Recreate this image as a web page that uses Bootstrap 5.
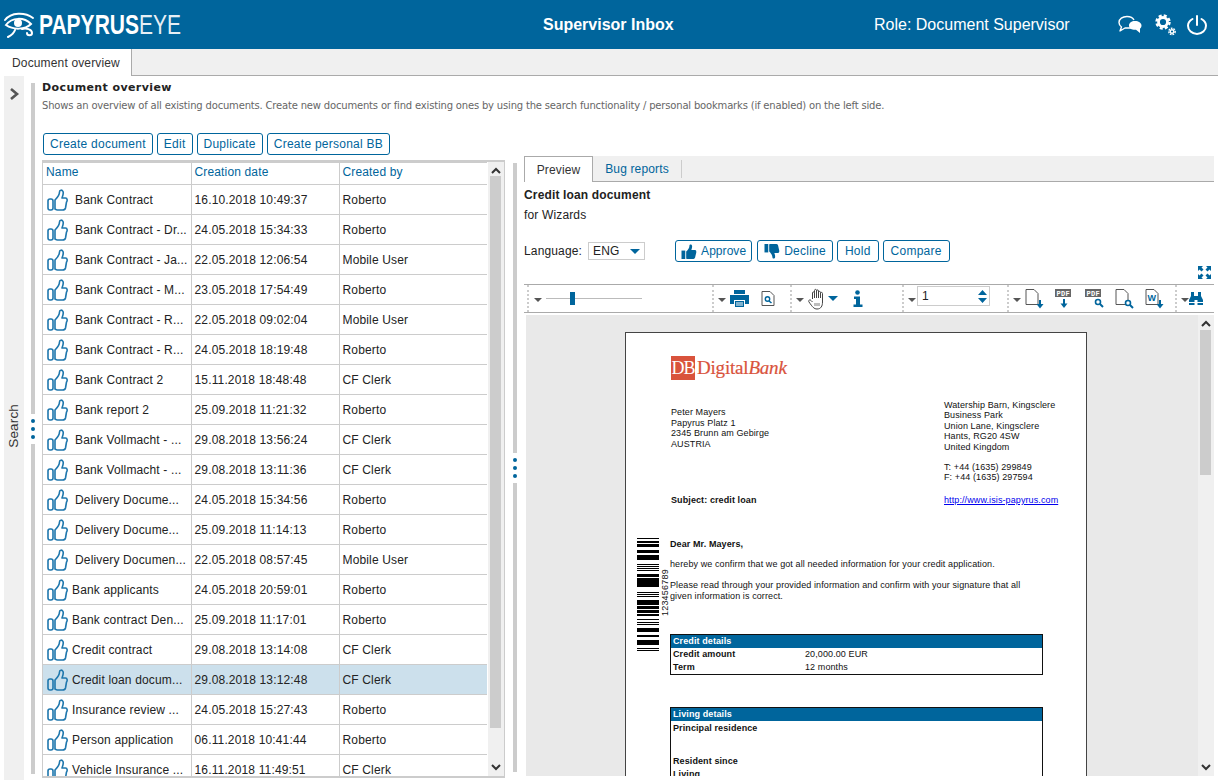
<!doctype html>
<html lang="en">
<head>
<meta charset="utf-8">
<title>Supervisor Inbox</title>
<link href="https://cdn.jsdelivr.net/npm/bootstrap@5.3.0/dist/css/bootstrap.min.css" rel="stylesheet">
<style>
html,body{height:780px;overflow:hidden}
body{font-family:"Liberation Sans",Arial,sans-serif;font-size:12px;color:#222;background:#fff;letter-spacing:.15px}
.topbar{height:49px;background:#00659c;color:#fff}
.logo-box{width:543px}
.logo-eye{margin-left:3px;margin-right:4px}
.logo-word{font-size:28px;line-height:1;font-family:"Liberation Sans",sans-serif;letter-spacing:0;transform:scaleX(.75);transform-origin:left center;white-space:nowrap}
.logo-word b{font-weight:700}
.logo-word span{font-weight:400;opacity:.9}
.top-title{width:331px;font-size:16px;font-weight:700;letter-spacing:0}
.top-role{width:244px;font-size:16px;letter-spacing:0}
.top-icons{gap:13px}
.top-power{margin-left:-2px}
.tabbar{height:27px;background:#f0f0f0;border-bottom:1px solid #aaa}
.tab-main{width:132px;height:27px;background:#fff;border-right:1px solid #aaa;padding:5px 0 0 12px;color:#333}
.workspace{height:704px;margin-left:4px}
.rail{width:20px;background:#f0f0f0;padding-top:11px}
.rail-label{writing-mode:vertical-rl;transform:rotate(180deg);font-size:13.5px;color:#333;margin-top:303px;margin-left:0}
.split{width:4px;gap:0}
.split-one{margin-left:7px;padding:7px 0 6px}
.split-two{margin-left:8px;padding:87px 0 8px}
.split-seg{flex:1;background:#ccc}
.split-dots{width:4px;padding:5px 0;display:flex;flex-direction:column;align-items:center;gap:4px}
.split-dots i{display:block;width:4px;height:4px;border-radius:50%;background:#00659c}
.pane-left{width:463px;margin-left:7px;padding-top:5px}
.pane-head{font-family:"DejaVu Sans",Verdana,sans-serif;font-size:11px;font-weight:700;color:#222;letter-spacing:.4px;line-height:14px}
.pane-desc{font-family:"DejaVu Sans",Verdana,sans-serif;font-size:10px;color:#666;letter-spacing:-.18px;line-height:14px;margin-top:4px;white-space:nowrap}
.act{height:22px;padding:0 6px;border:1px solid #00659c;border-radius:3px;color:#00659c;background:#fff;font-size:12px;line-height:20px;letter-spacing:.25px}
.act:hover{color:#00659c}
.act-approve{padding:0 5px;letter-spacing:.05px}
.act-hold{padding:0 7px}
.act-compare{padding:0 7px}
.act-row{gap:4px;margin:20px 0 5px 1px}
.grid-wrap{height:618px;border-top:2px solid #ccc;border-right:1px solid #ccc;border-bottom:2px solid #ccc;overflow:hidden}
.grid-clip{width:446px;overflow:hidden;border-left:1px solid #ccc}
.doc-table{table-layout:fixed;width:446px;margin:0;--bs-table-border-color:#ccc;--bs-table-color:#222}
.doc-table th,.doc-table td{padding:0 3px;white-space:nowrap;overflow:hidden;vertical-align:middle;border-color:#ccc;font-size:12px}
.doc-table th{height:21px;font-weight:400;color:#00659c;padding-bottom:3px}
.doc-table td{height:30px}
.doc-table tr>:first-child{border-left:0}
.doc-table .sel-row td{background:#cce0ec;--bs-table-bg:#cce0ec}
.thumb{width:21px;height:22px;vertical-align:-7px;margin-right:7px;margin-left:1px}
.thumb-close{margin-right:4px}
.vscroll{width:16px;background:#f0f0f0;margin-left:1px;position:relative}
.vthumb{position:absolute;left:2px;right:3px;top:14px;height:552px;background:#ccc}
.sc-up,.sc-down{position:absolute;left:3px}
.sc-up{top:5px}.sc-down{bottom:5px}
.pane-right{width:690px;margin-left:7px;padding-top:80px}
.subtabs{height:26px;background:#f0f0f0;border-bottom:1px solid #aaa}
.subtab-on{width:69px;height:26px;background:#fff;border:1px solid #aaa;border-bottom:0;text-align:center;line-height:26px;color:#333}
.subtab-off{width:89px;height:18px;margin-top:4px;border-right:1px solid #ccc;text-align:center;line-height:18px;color:#00659c}
.doc-title{font-weight:700;margin-top:5px;line-height:16px}
.doc-sub{margin-top:4px;line-height:16px}
.lang-row{margin-top:16px;height:24px}
.lang-pick{width:57px;height:18px;border:1px solid #ccc;margin-left:6px;padding:0 4px;line-height:16px;margin-right:30px}
.btn-group-a{gap:5px}
.btn-group-b{gap:4px}
.caret-d{display:block;width:0;height:0;border-left:4px solid transparent;border-right:4px solid transparent;border-top:4px solid #555;flex:none;margin-top:3px}
.caret-b{border-left-width:5px;border-right-width:5px;border-top:5px solid #00659c;margin-top:0}
.expand-row{height:18px;padding:3px 3px 0 0}
.toolbar{height:29px;border-top:1px solid #aaa;border-bottom:1px solid #aaa;margin-top:3px}
.tsec{height:27px;border-left:2px dotted #ccc;padding-left:4px}
.tsec-first{margin-left:3px;padding-left:5px}
.w1{width:185px}.w2{width:78px}.w3{width:112px}.w4{width:105px}.w5{width:168px}.w6{flex:1}
.slider-track{width:96px;height:1px;background:#bbb;position:relative;margin-left:4px}
.slider-knob{position:absolute;left:24px;top:-6px;width:5px;height:13px;background:#00659c}
.page-num{width:73px;height:20px;border:1px solid #ccc;padding:0 4px;line-height:18px;margin-left:1px;margin-top:-5px;position:relative}
.spin{position:absolute;right:1px;top:2px}
.tb-gap{margin-left:11px}
.tb-hand{margin-right:-2px}
.tb-bino{margin-left:-1px}
.tb-pdf-text{font:700 7px "Liberation Mono",monospace;fill:#fff;letter-spacing:.3px}
.tb-w-text{font:700 9px "Liberation Sans",sans-serif;fill:#00659c}
.viewer{height:461px;margin:2px 0 0 2px;background:#e9e9e9;overflow:hidden}
.view-area{width:671px;padding:17px 0 0 99px}
.paper{width:462px;height:600px;background:#fff;border:1px solid #444;border-bottom:0;padding:23px 27px 0 45px;font-size:9px;line-height:10.7px;color:#111;letter-spacing:.1px}
.db-logo{height:24px}
.db-box{width:24px;height:24px;background:#d9533c;color:#fff;font:400 18px/24px "Liberation Serif",serif;text-align:center;letter-spacing:-1px}
.db-word{font:19px/24px "Liberation Serif",serif;color:#d9533c;margin-left:2px;letter-spacing:-.2px;-webkit-text-stroke:.2px #d9533c}
.addr-row{margin-top:20px}
.addr-left{padding-top:7px}
.addr-right{width:115px;margin-right:0;line-height:10.4px;white-space:nowrap}
.gap-line{height:10px}
.subj-row{margin-top:12px}
.barcode-row{margin-left:-34px;margin-top:31px}
.barcode{width:22px;height:115px;flex:none}
.bar-num{writing-mode:vertical-rl;transform:rotate(180deg);font-size:9px;line-height:8px;height:111px;text-align:center;width:8px;margin:0 1px 0 2px;letter-spacing:.2px}
.letter-body{padding-top:2px}
.letter-p{margin:0 0 10px;white-space:nowrap}
.letter-block{width:373px;border:1px solid #111;margin-top:0}
.letter-block header{background:#00659c;color:#fff;font-weight:700;padding:0 2px;height:13px;line-height:13px}
.letter-line{padding:0 2px;height:13px;line-height:13px;display:flex}
.letter-line b{width:132px}
.letter-tall{padding-top:1px;height:14px}
.letter-void{height:20px}
.paper-space{height:23px}
.paper-space-lg{height:32px}
.view-bar{width:16px;margin-left:1px;background:#f0f0f0;position:relative}
.view-thumb{position:absolute;left:2px;width:11px;top:15px;height:145px;background:#ccc}
a.doc-link{color:#00e;text-decoration:underline}
</style>
</head>
<body>
<svg width="0" height="0" class="d-block position-absolute">
<symbol id="i-thumb" viewBox="0 0 21 22"><g fill="none" stroke="#1f77ad" stroke-width="1.6" stroke-linejoin="round"><rect x="1" y="10" width="5" height="11" rx="2"/><path d="M8 11C10 9 12.500 6.500 12.500 3 12.500 .8 15 .5 16 2.500 16.800 4.500 15.800 7 15 9H18.500C20.500 9 20.500 12 19.500 13L18.500 19C18 21 16.500 21 15.500 21H10.500C9.500 21 8 20 8 20Z"/></g></symbol>
<symbol id="i-thumb-fill" viewBox="0 0 16 16"><rect x="0" y="7" width="4" height="9" fill="#00659c"/><path fill="#00659c" d="M5 8C7 6 8.500 4 8.500 1.500 8.500 0 11 0 11.300 2 11.500 3.500 11 5 10.500 6.500H14.500C16 6.500 16 9 15.500 10L14.500 14.500C14 16 13 16 12 16H6C5.500 16 5 15.500 5 15.500Z"/></symbol>
</svg>

<header class="topbar d-flex align-items-center">
  <div class="logo-box d-flex align-items-center">
    <svg class="logo-eye" width="32" height="27" viewBox="0 0 32 27" fill="none" stroke="#fff" stroke-width="2" stroke-linecap="round"><path d="M2 9C8 1 22 1 30 7"/><path d="M3 14C9 6 21 6 28 13 22 19 10 19 3 14Z"/><circle cx="15" cy="12" r="4" fill="#fff" stroke="none"/><path d="M12 19C11 22 9 24 5 26"/><path d="M19 18C23 17 29 18 29 22 29 25 24 25 24 22"/></svg>
    <div class="logo-word"><b>PAPYRUS</b><span>EYE</span></div>
  </div>
  <div class="top-title">Supervisor Inbox</div>
  <div class="top-role">Role: Document Supervisor</div>
  <div class="top-icons d-flex align-items-center">
    <svg width="24" height="20" viewBox="0 0 24 20"><path d="M13 13H7L2 16 3.500 12C1.500 10.500 1 9 1 7.500 1 4 4.500 1.500 9 1.500 12 1.500 15 3 16 5" fill="none" stroke="#fff" stroke-width="1.4" stroke-linejoin="round"/><path d="M17 6C20.500 6 23.500 8 23.500 10.500 23.500 12 22.800 13 22 13.700V18L18 14.800C14 15.200 11 13.300 11 10.500 11 8 13.500 6 17 6Z" fill="#fff"/></svg>
    <svg width="21" height="22" viewBox="0 0 21 22" fill="none" stroke="#fff"><circle cx="8" cy="8" r="4.500" stroke-width="2.800"/><circle cx="8" cy="8" r="6.500" stroke-width="2.400" stroke-dasharray="3 2.100"/><circle cx="17" cy="17.500" r="1.800" stroke-width="1.400"/><circle cx="17" cy="17.500" r="3.200" stroke-width="1.400" stroke-dasharray="1.700 1"/></svg>
    <svg class="top-power" width="20" height="20" viewBox="0 0 20 20" fill="none" stroke="#fff" stroke-width="2" stroke-linecap="round"><path d="M5.500 4C2.800 5.600 1 8 1 10.700 1 15.300 5 19 10 19S19 15.300 19 10.700C19 8 17.200 5.600 14.500 4"/><path d="M10 1V10"/></svg>
  </div>
</header>

<nav class="tabbar"><div class="tab-main">Document overview</div></nav>

<main class="workspace d-flex">
  <aside class="rail d-flex flex-column">
    <svg class="ms-1" width="12" height="14" viewBox="0 0 12 14" fill="none" stroke="#555" stroke-width="2.600"><path d="M3 2L9 7 3 12"/></svg>
    <div class="rail-label">Search</div>
  </aside>

  <div class="split split-one d-flex flex-column"><div class="split-seg"></div><div class="split-dots"><i></i><i></i><i></i></div><div class="split-seg"></div></div>

  <section class="pane-left">
    <div class="pane-head">Document overview</div>
    <div class="pane-desc">Shows an overview of all existing documents. Create new documents or find existing ones by using the search functionality / personal bookmarks (if enabled) on the left side.</div>
    <div class="act-row d-flex">
      <button type="button" class="btn act">Create document</button>
      <button type="button" class="btn act">Edit</button>
      <button type="button" class="btn act">Duplicate</button>
      <button type="button" class="btn act">Create personal BB</button>
    </div>
    <div class="grid-wrap d-flex">
      <div class="grid-clip">
        <table class="table table-bordered doc-table">
          <colgroup><col style="width:148px"><col style="width:148px"><col style="width:150px"></colgroup>
          <thead><tr><th>Name</th><th>Creation date</th><th>Created by</th></tr></thead>
          <tbody>
            <tr><td><svg class="thumb"><use href="#i-thumb"/></svg>Bank Contract</td><td>16.10.2018 10:49:37</td><td>Roberto</td></tr>
            <tr><td><svg class="thumb"><use href="#i-thumb"/></svg>Bank Contract - Dr...</td><td>24.05.2018 15:34:33</td><td>Roberto</td></tr>
            <tr><td><svg class="thumb"><use href="#i-thumb"/></svg>Bank Contract - Ja...</td><td>22.05.2018 12:06:54</td><td>Mobile User</td></tr>
            <tr><td><svg class="thumb"><use href="#i-thumb"/></svg>Bank Contract - M...</td><td>23.05.2018 17:54:49</td><td>Roberto</td></tr>
            <tr><td><svg class="thumb"><use href="#i-thumb"/></svg>Bank Contract - R...</td><td>22.05.2018 09:02:04</td><td>Mobile User</td></tr>
            <tr><td><svg class="thumb"><use href="#i-thumb"/></svg>Bank Contract - R...</td><td>24.05.2018 18:19:48</td><td>Roberto</td></tr>
            <tr><td><svg class="thumb"><use href="#i-thumb"/></svg>Bank Contract 2</td><td>15.11.2018 18:48:48</td><td>CF Clerk</td></tr>
            <tr><td><svg class="thumb"><use href="#i-thumb"/></svg>Bank report 2</td><td>25.09.2018 11:21:32</td><td>Roberto</td></tr>
            <tr><td><svg class="thumb"><use href="#i-thumb"/></svg>Bank Vollmacht - ...</td><td>29.08.2018 13:56:24</td><td>CF Clerk</td></tr>
            <tr><td><svg class="thumb"><use href="#i-thumb"/></svg>Bank Vollmacht - ...</td><td>29.08.2018 13:11:36</td><td>CF Clerk</td></tr>
            <tr><td><svg class="thumb"><use href="#i-thumb"/></svg>Delivery Docume...</td><td>24.05.2018 15:34:56</td><td>Roberto</td></tr>
            <tr><td><svg class="thumb"><use href="#i-thumb"/></svg>Delivery Docume...</td><td>25.09.2018 11:14:13</td><td>Roberto</td></tr>
            <tr><td><svg class="thumb"><use href="#i-thumb"/></svg>Delivery Documen...</td><td>22.05.2018 08:57:45</td><td>Mobile User</td></tr>
            <tr><td><svg class="thumb thumb-close"><use href="#i-thumb"/></svg>Bank applicants</td><td>24.05.2018 20:59:01</td><td>Roberto</td></tr>
            <tr><td><svg class="thumb thumb-close"><use href="#i-thumb"/></svg>Bank contract Den...</td><td>25.09.2018 11:17:01</td><td>Roberto</td></tr>
            <tr><td><svg class="thumb thumb-close"><use href="#i-thumb"/></svg>Credit contract</td><td>29.08.2018 13:14:08</td><td>CF Clerk</td></tr>
            <tr class="sel-row"><td><svg class="thumb thumb-close"><use href="#i-thumb"/></svg>Credit loan docum...</td><td>29.08.2018 13:12:48</td><td>CF Clerk</td></tr>
            <tr><td><svg class="thumb thumb-close"><use href="#i-thumb"/></svg>Insurance review ...</td><td>24.05.2018 15:27:43</td><td>Roberto</td></tr>
            <tr><td><svg class="thumb thumb-close"><use href="#i-thumb"/></svg>Person application</td><td>06.11.2018 10:41:44</td><td>Roberto</td></tr>
            <tr><td><svg class="thumb thumb-close"><use href="#i-thumb"/></svg>Vehicle Insurance ...</td><td>16.11.2018 11:49:51</td><td>CF Clerk</td></tr>
          </tbody>
        </table>
      </div>
      <div class="vscroll">
        <div class="vthumb"></div>
        <svg class="sc-up" width="10" height="7" viewBox="0 0 10 7" fill="none" stroke="#333" stroke-width="2"><path d="M1 6L5 2 9 6"/></svg>
        <svg class="sc-down" width="10" height="7" viewBox="0 0 10 7" fill="none" stroke="#333" stroke-width="2"><path d="M1 1L5 5 9 1"/></svg>
      </div>
    </div>
  </section>

  <div class="split split-two d-flex flex-column"><div class="split-seg"></div><div class="split-dots"><i></i><i></i><i></i></div><div class="split-seg"></div></div>

  <section class="pane-right">
    <div class="subtabs d-flex"><div class="subtab-on">Preview</div><div class="subtab-off">Bug reports</div></div>
    <div class="doc-title">Credit loan document</div>
    <div class="doc-sub">for Wizards</div>
    <div class="lang-row d-flex align-items-center">
      <span>Language:</span>
      <div class="lang-pick d-flex align-items-center justify-content-between">ENG<i class="caret-d caret-b"></i></div>
      <div class="d-flex btn-group-a">
        <button type="button" class="btn act act-approve d-flex align-items-center gap-1"><svg width="16" height="15"><use href="#i-thumb-fill"/></svg>Approve</button>
        <div class="d-flex btn-group-b">
          <button type="button" class="btn act d-flex align-items-center gap-1"><svg width="16" height="15" viewBox="0 0 16 15"><g transform="matrix(1 0 0 -1 0 15)"><use href="#i-thumb-fill" width="16" height="15"/></g></svg>Decline</button>
          <button type="button" class="btn act act-hold">Hold</button>
          <button type="button" class="btn act act-compare">Compare</button>
        </div>
      </div>
    </div>
    <div class="expand-row d-flex justify-content-end">
      <svg width="13" height="13" viewBox="0 0 13 13" fill="#00659c"><path d="M0 0H5L3.500 1.500 5.500 3.500 3.500 5.500 1.500 3.500 0 5ZM13 0V5L11.500 3.500 9.500 5.500 7.500 3.500 9.500 1.500 8 0ZM0 13V8L1.500 9.500 3.500 7.500 5.500 9.500 3.500 11.500 5 13ZM13 13H8L9.500 11.500 7.500 9.500 9.500 7.500 11.500 9.500 13 8Z"/></svg>
    </div>
    <div class="toolbar d-flex">
      <div class="tsec tsec-first w1 d-flex align-items-center"><i class="caret-d"></i><div class="slider-track"><div class="slider-knob"></div></div></div>
      <div class="tsec w2 d-flex align-items-center gap-1"><i class="caret-d"></i>
        <svg width="19" height="19" viewBox="0 0 19 19" fill="#00659c"><path d="M4 1H15V5H4ZM0 6H19V15H15V11H4V15H0Z"/><path d="M5 12H14V18H5Z"/><path d="M6 14H13M6 16H13" stroke="#fff"/></svg>
        <svg class="ms-2" width="14" height="15" viewBox="0 0 14 15" fill="none" stroke="#555"><path d="M1 .5H9L13 4.500V14.500H1Z"/><circle cx="6.500" cy="8" r="2.200" stroke="#00659c" stroke-width="1.400"/><path d="M8 10L10.500 12" stroke="#00659c" stroke-width="1.600"/></svg>
      </div>
      <div class="tsec w3 d-flex align-items-center gap-1"><i class="caret-d"></i>
        <svg class="tb-hand" width="18" height="22" viewBox="0 0 18 22" fill="none" stroke="#444"><path d="M4.500 11V5C4.500 3.500 6.500 3.500 6.500 5V10M6.500 4.500V2.500C6.500 1 8.500 1 8.500 2.500V10M8.500 3C8.500 1.500 10.500 1.500 10.500 3V10M10.500 4.500C10.500 3 12.500 3 12.500 4.500V10M12.500 5.500C12.500 4 14.500 4 14.500 5.500V14C14.500 18 13 21 9 21 6 21 4.500 19 1 14 0 12.500 1.800 11 3 12.500L4.500 14"/><path d="M7 15V18M9 15V18M11 15V18" stroke-width=".7"/></svg>
        <i class="caret-d caret-b"></i>
        <svg class="ms-2" width="13" height="17" viewBox="-3 0 13 17" fill="#00659c"><circle cx="4.500" cy="2.500" r="2.300"/><path d="M1 6.500H7V14.500H9.500V17H.5V14.500H3V9H1Z"/></svg>
      </div>
      <div class="tsec w4 d-flex align-items-center"><i class="caret-d"></i>
        <div class="page-num">1<svg class="spin" width="11" height="15" viewBox="0 0 11 15" fill="#00659c"><path d="M5.500 1L10 6H1ZM5.500 14L1 9H10Z"/></svg></div>
      </div>
      <div class="tsec w5 d-flex align-items-center"><i class="caret-d"></i>
        <svg class="ms-1" width="19" height="20" viewBox="0 0 19 20" fill="none" stroke="#555"><path d="M1 .5H9L13 4.500V15.500H1Z"/><path d="M15 11V17" stroke="#00659c" stroke-width="2"/><path d="M11.500 15H18.500L15 19.500Z" fill="#00659c" stroke="none"/></svg>
        <svg class="tb-gap" width="19" height="20" viewBox="0 0 19 20"><rect width="16" height="8" fill="#666"/><text class="tb-pdf-text" x="1.500" y="6.500">PDF</text><path d="M9 10V16" stroke="#00659c" stroke-width="2"/><path d="M5.500 14.500H12.500L9 19Z" fill="#00659c"/></svg>
        <svg class="tb-gap" width="19" height="20" viewBox="0 0 19 20" fill="none"><rect width="16" height="8" fill="#666"/><text class="tb-pdf-text" x="1.500" y="6.500">PDF</text><circle cx="13" cy="13" r="2.500" stroke="#00659c" stroke-width="1.600"/><path d="M15 15L18 18" stroke="#00659c" stroke-width="2"/></svg>
        <svg class="tb-gap" width="19" height="20" viewBox="0 0 19 20" fill="none" stroke="#555"><path d="M1 .5H9L13 4.500V15.500H1Z"/><circle cx="13" cy="14" r="2.500" fill="#fff" stroke="#00659c" stroke-width="1.600"/><path d="M15 16L18 19" stroke="#00659c" stroke-width="2"/></svg>
        <svg class="tb-gap" width="19" height="20" viewBox="0 0 19 20" fill="none" stroke="#555"><path d="M1 .5H9L13 4.500V15.500H1Z"/><text class="tb-w-text" x="2.500" y="12" stroke="none">W</text><path d="M15 11V17" stroke="#00659c" stroke-width="2"/><path d="M11.500 15H18.500L15 19.500Z" fill="#00659c" stroke="none"/></svg>
      </div>
      <div class="tsec w6 d-flex align-items-center"><i class="caret-d"></i>
        <svg class="tb-bino" width="16" height="14" viewBox="0 0 16 14" fill="#00659c"><path d="M3 0H6V4H10V0H13V4L15 8V13H9.500V8H6.500V13H1V8L3 4Z"/><path d="M0 10H16V11H0Z" fill="#fff"/></svg>
      </div>
    </div>
    <div class="viewer d-flex">
      <div class="view-area">
        <article class="paper">
          <div class="db-logo d-flex"><div class="db-box">DB</div><div class="db-word">Digital<i>Bank</i></div></div>
          <div class="addr-row d-flex justify-content-between">
            <div class="addr-left">Peter Mayers<br>Papyrus Platz 1<br>2345 Brunn am Gebirge<br>AUSTRIA</div>
            <div class="addr-right">Watership Barn, Kingsclere<br>Business Park<br>Union Lane, Kingsclere<br>Hants, RG20 4SW<br>United Kingdom<div class="gap-line"></div>T: +44 (1635) 299849<br>F: +44 (1635) 297594</div>
          </div>
          <div class="subj-row d-flex justify-content-between"><b>Subject: credit loan</b><div class="addr-right"><a class="doc-link" href="#">http://www.isis-papyrus.com</a></div></div>
          <div class="barcode-row d-flex">
            <svg class="barcode" viewBox="0 0 22 115" fill="#000"><path d="M0 1h22v1H0zM0 4h22v2H0zM0 7h22v3H0zM0 13h22v3H0zM0 18h22v5H0zM0 27h22v1H0zM0 29h22v1H0zM0 31h22v1H0zM0 33h22v1H0zM0 37h22v3H0zM0 41h22v9H0zM0 55h22v1H0zM0 57h22v1H0zM0 59h22v1H0zM0 63h22v5H0zM0 69h22v3H0zM0 73h22v3H0zM0 77h22v2H0zM0 82h22v1H0zM0 85h22v1H0zM0 87h22v1H0zM0 91h22v4H0zM0 98h22v2H0zM0 103h22v5H0zM0 111h22v1H0zM0 113h22v1H0z"/></svg>
            <div class="bar-num">123456789</div>
            <div class="letter-body flex-grow-1">
              <p class="letter-p"><b>Dear Mr. Mayers,</b></p>
              <p class="letter-p">hereby we confirm that we got all needed information for your credit application.</p>
              <p class="letter-p">Please read through your provided information and confirm with your signature that all<br>given information is correct.</p>
              <div class="paper-space"></div>
              <section class="letter-block"><header>Credit details</header><div class="letter-line"><b>Credit amount</b><span>20,000.00 EUR</span></div><div class="letter-line"><b>Term</b><span>12 months</span></div></section>
              <div class="paper-space-lg"></div>
              <section class="letter-block"><header>Living details</header><div class="letter-line letter-tall"><b>Principal residence</b></div><div class="letter-void"></div><div class="letter-line"><b>Resident since</b></div><div class="letter-line"><b>Living</b></div></section>
            </div>
          </div>
        </article>
      </div>
      <div class="view-bar">
        <div class="view-thumb"></div>
        <svg class="sc-up" width="10" height="7" viewBox="0 0 10 7" fill="none" stroke="#333" stroke-width="2"><path d="M1 6L5 2 9 6"/></svg>
        <svg class="sc-down" width="10" height="7" viewBox="0 0 10 7" fill="none" stroke="#333" stroke-width="2"><path d="M1 1L5 5 9 1"/></svg>
      </div>
    </div>
  </section>
</main>
<script src="https://cdn.jsdelivr.net/npm/bootstrap@5.3.0/dist/js/bootstrap.bundle.min.js"></script>
</body>
</html>
